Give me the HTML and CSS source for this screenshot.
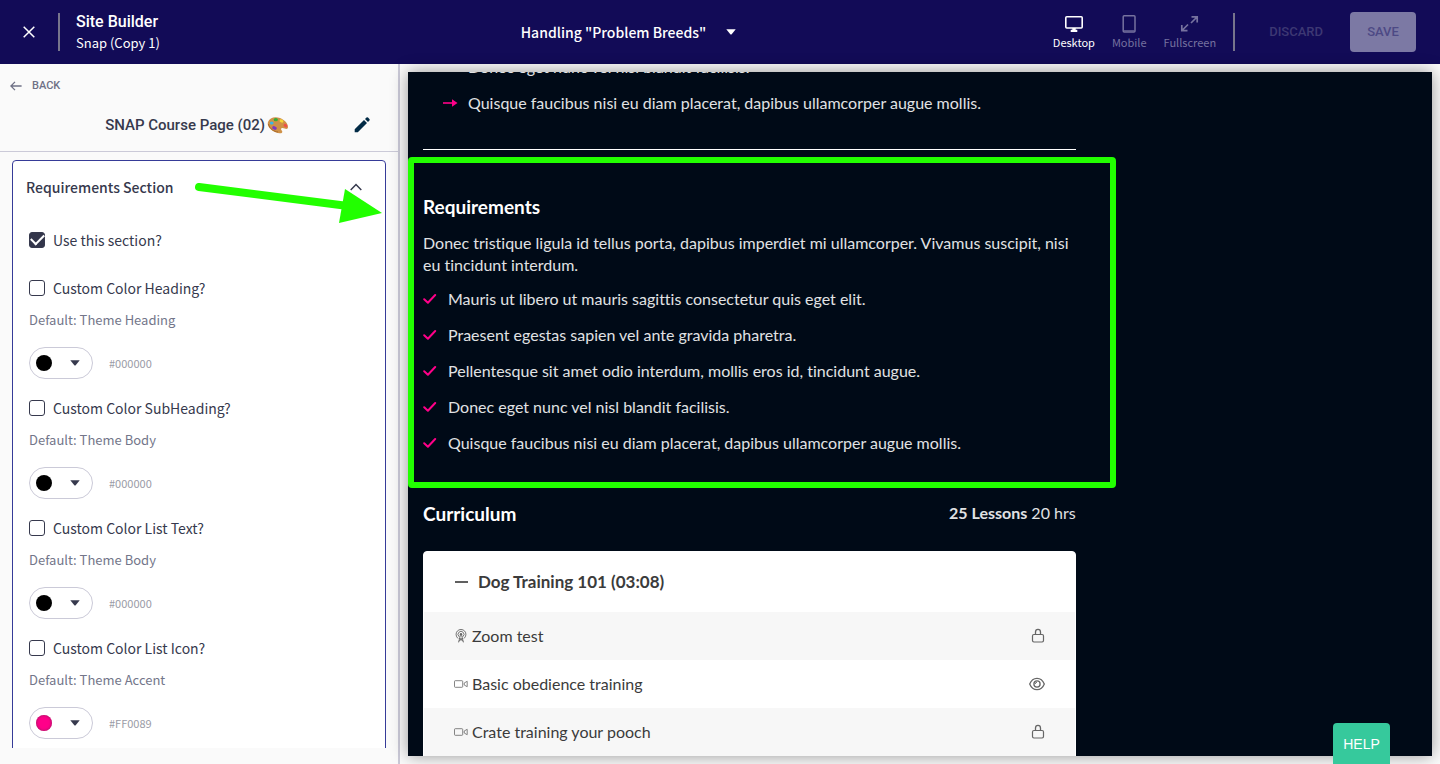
FILE: index.html
```html
<!DOCTYPE html>
<html lang="en">
<head>
<meta charset="utf-8">
<title>Site Builder</title>
<meta name="viewport" content="width=device-width, initial-scale=1">
<link rel="stylesheet" href="styles.css">
</head>
<body>
<svg class="sprite" aria-hidden="true">
  <symbol id="caret" viewBox="0 0 10 6"><path d="M0.3 0.3h9.4L5.9 4.9a1.2 1.2 0 0 1-1.8 0z" fill="currentColor"/></symbol>
  <symbol id="tick" viewBox="0 0 14 12"><path d="M1.2 6.2l3.7 3.5L12.2 2" fill="none" stroke="currentColor" stroke-width="2" stroke-linecap="round" stroke-linejoin="round"/></symbol>
  <symbol id="lock" viewBox="0 0 14 16"><rect x="1.5" y="6.5" width="11" height="7.500" rx="1.4" fill="none" stroke="currentColor" stroke-width="1.2"/><path d="M4.500 6.500V4a2.500 2.700 0 0 1 5 0v2.500" fill="none" stroke="currentColor" stroke-width="1.300"/></symbol>
  <symbol id="eye" viewBox="0 0 16 14"><path d="M0.700 7C2.300 3 4.900 1.300 8 1.300S13.700 3 15.300 7C13.700 11 11.100 12.700 8 12.700S2.300 11 0.700 7z" fill="none" stroke="currentColor" stroke-width="1.300"/><circle cx="8" cy="7" r="3.100" fill="none" stroke="currentColor" stroke-width="1.300"/><path d="M6.200 7A1.800 1.800 0 0 1 8 5.200" fill="none" stroke="currentColor"/></symbol>
  <symbol id="video" viewBox="0 0 14 8"><rect x="0.500" y="0.700" width="8.200" height="6.600" rx="0.800" fill="none" stroke="currentColor" stroke-width="0.800"/><path d="M10.200 3l3-1.700v5.400l-3-1.700z" fill="none" stroke="currentColor" stroke-width="0.800"/></symbol>
  <symbol id="podcast" viewBox="0 0 12 14"><g fill="none" stroke="currentColor" stroke-width="0.900" stroke-linecap="round"><path d="M2.800 9.300A5 5 0 1 1 9.200 9.300"/><path d="M4 7.600A3 3 0 1 1 8 7.600"/><path d="M5.300 6.500L3.700 13M6.700 6.500L8.300 13M4.600 9.800h2.800M4 12l3.200-2.200M8 12L4.800 9.800"/></g><circle cx="6" cy="5.300" r="1.200" fill="currentColor"/></symbol>
</svg>

<header class="topbar">
  <div class="topbar-left">
    <button class="icon-button" aria-label="Close">
      <svg width="12" height="12" viewBox="0 0 12 12"><path d="M0.700 0.700l10.600 10.600M11.300 0.700L0.700 11.300" stroke="currentColor" stroke-width="1.500"/></svg>
    </button>
    <span class="divider"></span>
    <div class="site-name">
      <h1>Site Builder</h1>
      <p>Snap (Copy 1)</p>
    </div>
  </div>
  <button class="page-select">Handling "Problem Breeds"
    <svg width="10" height="6"><use href="#caret"/></svg>
  </button>
  <div class="topbar-right">
    <div class="modes">
      <button class="mode mode-active">
        <svg width="20" height="18" viewBox="0 0 20 18"><rect x="1.800" y="1.800" width="16.400" height="11.200" rx="1" fill="none" stroke="currentColor" stroke-width="1.600"/><path d="M8.300 13h3.400v1.700h1.600V17H6.700v-2.300h1.600z" fill="currentColor"/></svg>
        Desktop</button>
      <button class="mode">
        <svg width="20" height="18" viewBox="0 0 20 18"><rect x="4.200" y="0.800" width="11.800" height="16.200" rx="1" fill="none" stroke="currentColor" stroke-width="1.500"/><path d="M5 15.800h10.500" stroke="currentColor"/></svg>
        Mobile</button>
      <button class="mode">
        <svg width="20" height="18" viewBox="0 0 20 18"><path d="M11.500 1.800h5.700v5.700M17 2l-6 6M1.800 10v5.700h5.700M2 15.500l6-6" fill="none" stroke="currentColor" stroke-width="1.700"/></svg>
        Fullscreen</button>
    </div>
    <span class="divider"></span>
    <button class="discard">DISCARD</button>
    <button class="save">SAVE</button>
  </div>
</header>

<main class="workspace">
  <aside class="sidebar">
    <div class="sidebar-head">
      <a class="back" href="#"><svg width="12" height="10" viewBox="0 0 12 10"><path d="M5 0.900L0.900 5 5 9.100M1 5h10.600" fill="none" stroke="currentColor" stroke-width="1.300"/></svg>BACK</a>
      <div class="page-title">
        <h2>SNAP Course Page (02)
          <svg width="22" height="18" viewBox="0 0 22 18" role="img" aria-label="Palette"><path d="M1 6C2.500 1.500 8 0 13 2c4.500 1.800 8 5.500 8 9 0 2-1.500 2.400-3.300 1.600-1.800-.8-3.400-.9-3.600.5-.2 1.500 2 2 1 3.300-1.300 1.600-6 1-9.500-1.600C2 12.300 0 9 1 6z" fill="#cf9147"/><path d="M1.500 8C2.500 13 7 15.500 11 16" stroke="#a8692c" fill="none"/><ellipse cx="4.700" cy="7" rx="1.900" ry="1.600" fill="#36b7e8"/><ellipse cx="8.800" cy="3.700" rx="2.100" ry="1.600" fill="#34ad39"/><ellipse cx="14.500" cy="5" rx="2" ry="1.500" fill="#f6d637" transform="rotate(25 14.500 5)"/><ellipse cx="18.500" cy="9.600" rx="2" ry="1.500" fill="#ef5047" transform="rotate(35 18.500 9.600)"/><ellipse cx="7.500" cy="12" rx="2.400" ry="1.700" fill="#8139bd" transform="rotate(20 7.500 12)"/></svg>
        </h2>
        <button class="icon-button edit" aria-label="Edit title"><svg width="16" height="16" viewBox="0 0 16 16"><path d="M0.700 12.200L10 3l3 3-9.200 9.300H0.700zM11 2l1.500-1.400a1.100 1.100 0 0 1 1.500 0L15.400 2a1.100 1.100 0 0 1 0 1.500L14 5z" fill="currentColor"/></svg></button>
      </div>
    </div>
    <div class="sidebar-body">
      <section class="panel">
        <button class="panel-toggle" aria-expanded="true">Requirements Section
          <svg width="12" height="8" viewBox="0 0 12 8"><path d="M0.700 7L6 1.500 11.300 7" fill="none" stroke="currentColor" stroke-width="1.500"/></svg>
        </button>
        <svg class="pointer" width="188" height="44" viewBox="0 0 188 44" aria-hidden="true"><path d="M5 10L154 29" stroke="#2f0" stroke-width="8" stroke-linecap="round"/><path d="M151 12l37 24-43 10z" fill="#2f0"/></svg>
        <label class="check check-main"><input type="checkbox" checked>Use this section?</label>
        <div class="field">
          <label class="check"><input type="checkbox">Custom Color Heading?</label>
          <p class="hint">Default: Theme Heading</p>
          <div class="color"><button class="picker" aria-label="Heading color"><span class="swatch"></span><svg width="10" height="6"><use href="#caret"/></svg></button><span class="hex">#000000</span></div>
        </div>
        <div class="field">
          <label class="check"><input type="checkbox">Custom Color SubHeading?</label>
          <p class="hint">Default: Theme Body</p>
          <div class="color"><button class="picker" aria-label="Subheading color"><span class="swatch"></span><svg width="10" height="6"><use href="#caret"/></svg></button><span class="hex">#000000</span></div>
        </div>
        <div class="field">
          <label class="check"><input type="checkbox">Custom Color List Text?</label>
          <p class="hint">Default: Theme Body</p>
          <div class="color"><button class="picker" aria-label="List text color"><span class="swatch"></span><svg width="10" height="6"><use href="#caret"/></svg></button><span class="hex">#000000</span></div>
        </div>
        <div class="field">
          <label class="check"><input type="checkbox">Custom Color List Icon?</label>
          <p class="hint">Default: Theme Accent</p>
          <div class="color"><button class="picker" aria-label="List icon color"><span class="swatch swatch-accent"></span><svg width="10" height="6"><use href="#caret"/></svg></button><span class="hex">#FF0089</span></div>
        </div>
      </section>
    </div>
  </aside>

  <div class="stage">
    <div class="preview">
      <div class="column">
        <ul class="points points-arrow">
          <li><svg width="15" height="10" viewBox="0 0 15 10"><path d="M0 5h10" stroke="currentColor" stroke-width="1.600"/><path d="M9 1.300L14.500 5 9 8.700z" fill="currentColor"/></svg>Donec eget nunc vel nisl blandit facilisis.</li>
          <li><svg width="15" height="10" viewBox="0 0 15 10"><path d="M0 5h10" stroke="currentColor" stroke-width="1.600"/><path d="M9 1.300L14.500 5 9 8.700z" fill="currentColor"/></svg>Quisque faucibus nisi eu diam placerat, dapibus ullamcorper augue mollis.</li>
        </ul>
        <hr class="rule">
        <section class="requirements">
          <h2>Requirements</h2>
          <p>Donec tristique ligula id tellus porta, dapibus imperdiet mi ullamcorper. Vivamus suscipit, nisi eu tincidunt interdum.</p>
          <ul class="points">
            <li><svg width="14" height="12"><use href="#tick"/></svg>Mauris ut libero ut mauris sagittis consectetur quis eget elit.</li>
            <li><svg width="14" height="12"><use href="#tick"/></svg>Praesent egestas sapien vel ante gravida pharetra.</li>
            <li><svg width="14" height="12"><use href="#tick"/></svg>Pellentesque sit amet odio interdum, mollis eros id, tincidunt augue.</li>
            <li><svg width="14" height="12"><use href="#tick"/></svg>Donec eget nunc vel nisl blandit facilisis.</li>
            <li><svg width="14" height="12"><use href="#tick"/></svg>Quisque faucibus nisi eu diam placerat, dapibus ullamcorper augue mollis.</li>
          </ul>
          <div class="highlight"></div>
        </section>
        <section class="curriculum">
          <div class="curriculum-head">
            <h2>Curriculum</h2>
            <p><strong>25 Lessons</strong> 20 hrs</p>
          </div>
          <div class="card">
            <button class="chapter" aria-expanded="true"><span class="minus"></span>Dog Training 101 (03:08)</button>
            <a class="lesson" href="#"><svg class="kind" width="14" height="14"><use href="#podcast"/></svg><span>Zoom test</span><svg width="14" height="16"><use href="#lock"/></svg></a>
            <a class="lesson" href="#"><svg class="kind" width="14" height="8"><use href="#video"/></svg><span>Basic obedience training</span><svg width="16" height="14"><use href="#eye"/></svg></a>
            <a class="lesson" href="#"><svg class="kind" width="14" height="8"><use href="#video"/></svg><span>Crate training your pooch</span><svg width="14" height="16"><use href="#lock"/></svg></a>
          </div>
        </section>
      </div>
    </div>
  </div>
</main>
<button class="help">HELP</button>
</body>
</html>
```
FILE: styles.css
```css
* { box-sizing: border-box; }

body {
  margin: 0;
  height: 100vh;
  display: flex;
  flex-direction: column;
  overflow: hidden;
  background: #fbfbfb;
  color: #36394d;
  font: 14px/24px "Noto Sans CJK SC", "Open Sans", sans-serif;
}

h1, h2, p, ul { margin: 0; padding: 0; }
ul { list-style: none; }
a { color: inherit; text-decoration: none; }
button { border: 0; padding: 0; background: none; color: inherit; font: inherit; cursor: pointer; }
svg { flex: none; display: block; }
.sprite { position: absolute; width: 0; height: 0; }
.icon-button { display: flex; }

/* Top bar */
.topbar {
  flex: none;
  height: 64px;
  display: grid;
  grid-template-columns: 36% 1fr auto;
  align-items: center;
  padding-right: 24px;
  background: #120b57;
  color: #fff;
}
.topbar-left { display: flex; align-items: center; padding-left: 23px; gap: 23px; }
.divider { width: 2px; height: 38px; background: #77758c; }
.site-name { margin-left: -7px; }
.site-name h1 { font: 500 16px/22px Roboto, sans-serif; }
.site-name p { font-size: 13px; line-height: 20px; }
.page-select { justify-self: start; display: flex; align-items: center; gap: 20px; padding-left: 11px; font-weight: 500; }
.topbar-right { display: flex; align-items: center; }
.modes { display: flex; gap: 17px; margin-right: 17px; }
.mode { display: flex; flex-direction: column; align-items: center; gap: 1px; padding-top: 1px; color: #76729f; font-size: 11px; line-height: 16px; }
.mode-active { color: #fff; }
.discard { margin: 0 27px 0 34px; color: #3d3873; font: 500 13px/24px Roboto, sans-serif; }
.save { width: 66px; height: 40px; border-radius: 4px; background: #7c79a4; color: #4d4985; font: 500 13px/24px Roboto, sans-serif; }

/* Sidebar */
.workspace { flex: 1; min-height: 0; display: flex; }
.sidebar { flex: none; width: 400px; display: flex; flex-direction: column; border-right: 2px solid #cbcad8; background: #fafafa; }
.sidebar-head { padding: 10px 0 14px; border-bottom: 1px solid #cbcad8; }
.back { display: inline-flex; align-items: center; gap: 10px; padding-left: 10px; color: #6f7186; font: 500 11px/24px Roboto, sans-serif; vertical-align: top; }
.page-title { display: flex; align-items: center; justify-content: flex-end; padding: 15px 28px 0 0; gap: 65px; }
.page-title h2 { display: flex; align-items: center; gap: 2px; font: 500 15px/24px Roboto, sans-serif; }
.edit { color: #012a45; }
.sidebar-body { flex: 1; min-height: 0; margin: 8px 12px 16px; overflow: hidden; }
.panel { position: relative; padding: 14px 16px; border: 1px solid #363b98; border-radius: 4px; background: #fff; }
.panel-toggle { display: flex; align-items: center; justify-content: space-between; width: 100%; padding: 0 4px 0 0; margin-left: -3px; font-weight: 500; }
.pointer { position: absolute; top: 16px; left: 181px; overflow: visible; }
.check { display: flex; align-items: center; gap: 8px; }
.check-main { margin: 29px 0 24px; }
.check input {
  appearance: none;
  display: grid;
  place-items: center;
  width: 16px;
  height: 16px;
  margin: 0;
  border: 1px solid #36394d;
  border-radius: 3px;
}
.check input:checked { background: #33364b; }
.check input:checked::after {
  content: "";
  width: 11px;
  height: 6px;
  margin-bottom: 4px;
  border: solid #fff;
  border-width: 0 0 2px 2px;
  transform: rotate(-45deg);
}
.field { margin-bottom: 17px; }
.hint { margin: 10px 0 17px; color: #73768a; font-size: 13px; line-height: 20px; }
.color { display: flex; align-items: center; gap: 16px; }
.picker { display: flex; align-items: center; gap: 18px; width: 64px; height: 32px; padding-left: 6px; border: 1px solid #cbcad8; border-radius: 16px; background: #fff; }
.swatch { width: 16px; height: 16px; border-radius: 50%; background: #000; }
.swatch-accent { background: #ff0089; box-shadow: inset 0 0 3px #8a2058; }
.hex { color: #9a9ba6; font-size: 11px; line-height: 16px; }

/* Preview */
.stage { flex: 1; min-width: 0; padding: 8px; }
.preview {
  height: 100%;
  overflow: hidden;
  background: #000a17;
  color: #e0e2e4;
  box-shadow: 0 0 16px rgba(0, 0, 0, 0.4);
  font: 16px/22px Lato, sans-serif;
  font-variant-ligatures: none;
}
.column { width: 66.667%; padding: 0 15px; margin-top: -23px; }
.points li { display: flex; align-items: center; gap: 11px; height: 36px; }
.points svg { color: #ff0089; }
.points-arrow { padding-left: 20px; }
.points-arrow li { gap: 10px; }
.rule { margin: 28px 0 0; border: 0; border-top: 1px solid #fff; }
.requirements { position: relative; padding: 45px 0 27px; }
.preview h2 { color: #fff; font-size: 19px; line-height: 24px; }
.requirements p { margin: 13px 0 5px; }
.highlight { position: absolute; top: 7px; bottom: 0; left: -15px; right: -40px; border: 6px solid #2f0; border-radius: 4px; }
.curriculum { padding-top: 14px; }
.curriculum-head { display: flex; justify-content: space-between; }
.card { margin-top: 25px; border: 1px solid #fff; border-radius: 4px 4px 0 0; background: #fff; color: #3b3b3b; }
.chapter { display: flex; align-items: center; gap: 10px; width: 100%; height: 60px; padding-left: 31px; font-size: 17px; font-weight: 700; }
.minus { width: 13px; height: 2px; background: #606060; }
.lesson { display: flex; align-items: center; gap: 4px; height: 48px; padding: 0 30px; }
.lesson:nth-child(even) { background: #f7f7f7; }
.lesson span { flex: 1; }
.lesson svg { color: #666; }

.help { position: fixed; right: 50px; bottom: 0; width: 57px; height: 41px; border-radius: 4px 4px 0 0; background: #36c99c; color: #fff; font: 14px/20px "Liberation Sans", Arial, sans-serif; }
```
